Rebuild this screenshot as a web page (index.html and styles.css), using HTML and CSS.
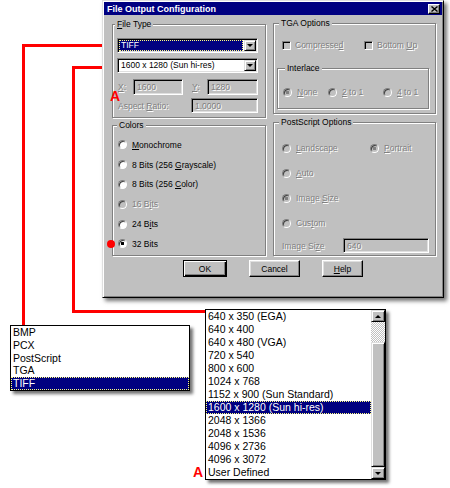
FILE: index.html
```html
<!DOCTYPE html>
<html lang="en">

<head>
    <meta charset="UTF-8">
    <meta name="viewport" content="width=device-width, initial-scale=1.0">
    <title>File Output Configuration</title>
    <link rel="stylesheet" href="styles.css">
</head>

<body>
<div class="canvas">
    <!-- red callout lines from the combos down to their open lists -->
    <svg class="callouts" width="450" height="488">
        <polyline points="23.5,326 23.5,45.5 106,45.5" />
        <polyline points="106,67.5 73.5,67.5 73.5,311.5 206,311.5" />
    </svg>

    <div class="dialog">
        <div class="titlebar">
            <span class="title">File Output Configuration</span>
            <span class="close-btn">
                <svg width="7" height="6" viewBox="0 0 7 6"><path d="M0.5 0.5 L6.5 5.5 M6.5 0.5 L0.5 5.5" stroke="#000" stroke-width="1.4" fill="none" /></svg>
            </span>
        </div>

        <div class="dialog-body">
            <div class="column col-left">
                <div class="group group-filetype">
                    <span class="legend"><u>F</u>ile Type</span>
                    <div class="combo combo-first is-focused">
                        <span class="combo-value">TIFF</span>
                        <span class="drop-btn"></span>
                    </div>
                    <div class="combo combo-second">
                        <span class="combo-value">1600 x 1280 (Sun hi-res)</span>
                        <span class="drop-btn"></span>
                    </div>
                    <div class="field-row row-xy">
                        <span class="label lbl-x disabled"><u>X</u>:</span>
                        <span class="edit edit-x disabled">1600</span>
                        <span class="label lbl-y disabled"><u>Y</u>:</span>
                        <span class="edit edit-y disabled">1280</span>
                    </div>
                    <div class="field-row row-aspect">
                        <span class="label lbl-aspect disabled">Aspect <u>R</u>atio:</span>
                        <span class="edit edit-aspect disabled">1.0000</span>
                    </div>
                </div>

                <div class="group group-colors">
                    <span class="legend">Colors</span>
                    <div class="color-list">
                        <div class="option"><span class="radio"></span><span><u>M</u>onochrome</span></div>
                        <div class="option"><span class="radio"></span><span>8 Bits (256 <u>G</u>rayscale)</span></div>
                        <div class="option"><span class="radio"></span><span>8 Bits (256 <u>C</u>olor)</span></div>
                        <div class="option"><span class="radio is-disabled"></span><span class="disabled">16 B<u>i</u>ts</span></div>
                        <div class="option"><span class="radio"></span><span>24 B<u>i</u>ts</span></div>
                        <div class="option"><span class="radio is-checked"></span><span>32 Bits</span></div>
                    </div>
                </div>
            </div>

            <div class="column col-right">
                <div class="group group-tga">
                    <span class="legend">TGA Options</span>
                    <div class="check-row">
                        <div class="check-item item-compressed"><span class="checkbox"></span><span class="disabled">Compresse<u>d</u></span></div>
                        <div class="check-item"><span class="checkbox"></span><span class="disabled">Bottom <u>U</u>p</span></div>
                    </div>
                    <div class="group subgroup">
                        <span class="legend">Interlace</span>
                        <div class="option-row interlace-row">
                            <div class="option item-none"><span class="radio is-disabled is-checked"></span><span class="disabled"><u>N</u>one</span></div>
                            <div class="option item-half"><span class="radio is-disabled"></span><span class="disabled"><u>2</u> to 1</span></div>
                            <div class="option"><span class="radio is-disabled"></span><span class="disabled"><u>4</u> to 1</span></div>
                        </div>
                    </div>
                </div>

                <div class="group group-ps">
                    <span class="legend">PostScript Options</span>
                    <div class="option-row ps-row ps-first">
                        <div class="option item-landscape"><span class="radio is-disabled"></span><span class="disabled"><u>L</u>andscape</span></div>
                        <div class="option"><span class="radio is-disabled is-checked"></span><span class="disabled"><u>P</u>ortrait</span></div>
                    </div>
                    <div class="option-row ps-row">
                        <div class="option"><span class="radio is-disabled"></span><span class="disabled"><u>A</u>uto</span></div>
                    </div>
                    <div class="option-row ps-row">
                        <div class="option"><span class="radio is-disabled is-checked"></span><span class="disabled">Image <u>S</u>ize</span></div>
                    </div>
                    <div class="option-row ps-row">
                        <div class="option"><span class="radio is-disabled"></span><span class="disabled">Cus<u>t</u>om</span></div>
                    </div>
                    <div class="field-row row-size">
                        <span class="label lbl-size disabled">Image Si<u>z</u>e</span>
                        <span class="edit edit-size disabled">640</span>
                    </div>
                </div>
            </div>
        </div>

        <div class="buttons">
            <span class="btn btn-default btn-ok">OK</span>
            <span class="btn btn-cancel">Cancel</span>
            <span class="btn btn-help"><u>H</u>elp</span>
        </div>
    </div>

    <div class="list list-types">
        <div class="list-item">BMP</div>
        <div class="list-item">PCX</div>
        <div class="list-item">PostScript</div>
        <div class="list-item">TGA</div>
        <div class="list-item selected">TIFF</div>
    </div>

    <div class="list list-sizes">
        <div class="list-items">
            <div class="list-item">640 x 350 (EGA)</div>
            <div class="list-item">640 x 400</div>
            <div class="list-item">640 x 480 (VGA)</div>
            <div class="list-item">720 x 540</div>
            <div class="list-item">800 x 600</div>
            <div class="list-item">1024 x 768</div>
            <div class="list-item">1152 x 900 (Sun Standard)</div>
            <div class="list-item selected">1600 x 1280 (Sun hi-res)</div>
            <div class="list-item">2048 x 1366</div>
            <div class="list-item">2048 x 1536</div>
            <div class="list-item">4096 x 2736</div>
            <div class="list-item">4096 x 3072</div>
            <div class="list-item">User Defined</div>
        </div>
        <div class="scrollbar">
            <span class="scroll-btn arrow-up"></span>
            <span class="scroll-track"></span>
            <span class="scroll-thumb"></span>
            <span class="scroll-btn arrow-down"></span>
        </div>
    </div>

    <span class="mark mark-a1">A</span>
    <span class="mark mark-a2">A</span>
    <span class="mark-dot"></span>
</div>
</body>
</html>
```

FILE: styles.css
```css
body {
    margin: 0;
    background-color: #fff;
    font-family: "Liberation Sans", Arial, sans-serif;
}

.canvas {
    position: relative;
    width: 450px;
    height: 488px;
    overflow: hidden;
}

.callouts {
    position: absolute;
    left: 0;
    top: 0;
}

.callouts polyline {
    fill: none;
    stroke: #f00;
    stroke-width: 3;
}

/* dialog window */
.dialog {
    position: absolute;
    left: 102px;
    top: 0;
    width: 342px;
    height: 298px;
    box-sizing: border-box;
    padding: 1px;
    background-color: #c0c0c0;
    border: 1px solid;
    border-color: #dfdfdf #000 #000 #dfdfdf;
    box-shadow: inset 1px 1px 0 #fff, inset -1px -1px 0 #808080, 3px 3px 4px rgba(0, 0, 0, 0.55);
    font-size: 8.5px;
    color: #000;
}

.titlebar {
    height: 13px;
    display: flex;
    align-items: center;
    justify-content: space-between;
    padding: 0 2px 0 3px;
    background-color: #000080;
    color: #fff;
    font-weight: bold;
    font-size: 9px;
}

.close-btn {
    width: 12px;
    height: 10px;
    box-sizing: border-box;
    display: flex;
    align-items: center;
    justify-content: center;
    background-color: #c0c0c0;
    border: 1px solid;
    border-color: #fff #000 #000 #fff;
    box-shadow: inset -1px -1px 0 #808080;
}

.dialog-body {
    display: flex;
    gap: 7px;
    padding: 0 6px 0 8px;
}

.column {
    display: flex;
    flex-direction: column;
}

.col-left {
    width: 154px;
    padding-top: 9px;
    gap: 7px;
}

.col-right {
    width: 163px;
    padding-top: 8px;
    gap: 8px;
}

/* etched group box */
.group {
    box-sizing: border-box;
    border: 1px solid #808080;
    box-shadow: 1px 1px 0 #fff, inset 1px 1px 0 #fff;
}

.legend {
    display: block;
    width: fit-content;
    height: 11px;
    line-height: 11px;
    margin: -6px 0 0 0;
    padding: 0 2px;
    background-color: #c0c0c0;
}

.group-filetype {
    height: 94px;
    padding: 0 7px 0 4px;
}

.group-filetype .legend {
    margin-left: -2px;
}

.group-colors {
    height: 131px;
    padding-left: 5px;
}

.group-colors .legend {
    margin-left: -1px;
}

.group-tga {
    height: 91px;
    padding: 0 6px 0 3px;
}

.group-tga .legend {
    margin-left: 2px;
}

.group-ps {
    height: 134px;
    padding: 0 6px 0 8px;
}

.group-ps .legend {
    margin-left: -3px;
}

.subgroup {
    height: 41px;
    margin-top: 17px;
    padding-left: 5px;
}

/* combo boxes and edits */
.combo,
.edit {
    box-sizing: border-box;
    border: 1px solid;
    border-color: #808080 #fff #fff #808080;
    box-shadow: inset 1px 1px 0 #000, inset -1px -1px 0 #dfdfdf;
}

.combo {
    display: flex;
    height: 15px;
    padding: 1px;
    background-color: #fff;
}

.combo-first {
    margin-top: 8px;
}

.combo-second {
    margin-top: 5px;
}

.combo-value {
    flex: 1;
    line-height: 11px;
    padding-left: 2px;
    margin-right: 1px;
    white-space: nowrap;
}

.is-focused .combo-value {
    background-color: #000080;
    color: #fff;
    outline: 1px dotted #ffff80;
    outline-offset: -1px;
}

.drop-btn {
    width: 12px;
    box-sizing: border-box;
    display: flex;
    align-items: center;
    justify-content: center;
    background-color: #c0c0c0;
    border: 1px solid;
    border-color: #dfdfdf #000 #000 #dfdfdf;
    box-shadow: inset 1px 1px 0 #fff, inset -1px -1px 0 #808080;
}

.drop-btn::before {
    content: "";
    border-left: 3px solid transparent;
    border-right: 3px solid transparent;
    border-top: 3px solid #000;
}

.edit {
    display: flex;
    align-items: center;
    padding-left: 3px;
    background-color: #c0c0c0;
}

.field-row {
    display: flex;
    align-items: center;
}

.row-xy {
    height: 16px;
    margin-top: 6px;
}

.row-xy .edit {
    height: 16px;
}

.row-aspect {
    height: 15px;
    margin-top: 3px;
}

.row-aspect .edit,
.row-size .edit {
    height: 15px;
}

.label {
    padding-left: 1px;
    box-sizing: border-box;
}

.lbl-x {
    width: 16px;
}

.edit-x {
    width: 50px;
}

.lbl-y {
    width: 16px;
    margin-left: 8px;
}

.edit-y,
.edit-aspect,
.edit-size {
    flex: 1;
}

.lbl-aspect {
    width: 74px;
}

.disabled {
    color: #808080;
    text-shadow: 1px 1px 0 #fff;
}

/* radios and checkboxes */
.option,
.check-item {
    display: flex;
    align-items: center;
    gap: 5px;
    white-space: nowrap;
}

.check-item {
    gap: 4px;
}

.radio {
    width: 9px;
    height: 9px;
    box-sizing: border-box;
    border-radius: 50%;
    border: 1px solid;
    border-color: #808080 #fff #fff #808080;
    box-shadow: inset 1px 1px 0 #404040;
    background-color: #fff;
    flex: none;
}

.radio.is-checked {
    background: radial-gradient(circle, #000 0 1.4px, #fff 1.9px);
}

.radio.is-disabled {
    background-color: #c0c0c0;
}

.radio.is-disabled.is-checked {
    background: radial-gradient(circle, #808080 0 1.4px, #c0c0c0 1.9px);
}

.checkbox {
    width: 9px;
    height: 9px;
    box-sizing: border-box;
    border: 1px solid;
    border-color: #808080 #fff #fff #808080;
    box-shadow: inset 1px 1px 0 #000;
    background-color: #c0c0c0;
    flex: none;
}

.color-list {
    margin-top: 4px;
}

.color-list .option {
    height: 19.8px;
}

.check-row {
    display: flex;
    height: 12px;
    margin-top: 10px;
    padding-left: 5px;
}

.item-compressed {
    width: 82px;
}

.option-row {
    display: flex;
    height: 12px;
}

.interlace-row {
    margin-top: 12px;
}

.item-none {
    width: 45px;
}

.item-half {
    width: 55px;
}

.ps-row {
    margin-top: 13px;
}

.ps-first {
    margin-top: 14px;
}

.item-landscape {
    width: 88px;
}

.row-size {
    height: 15px;
    margin-top: 9px;
}

.lbl-size {
    width: 61px;
    padding-left: 0;
}

/* push buttons */
.buttons {
    display: flex;
    justify-content: center;
    gap: 22px;
    margin-top: 4px;
}

.btn {
    height: 17px;
    box-sizing: border-box;
    display: flex;
    align-items: center;
    justify-content: center;
    background-color: #c0c0c0;
    border: 1px solid;
    border-color: #fff #000 #000 #fff;
    box-shadow: inset -1px -1px 0 #808080, inset 1px 1px 0 #dfdfdf;
}

.btn-default {
    border-color: #000;
    box-shadow: inset 1px 1px 0 #fff, inset -1px -1px 0 #000, inset -2px -2px 0 #808080;
}

.btn-ok {
    width: 44px;
}

.btn-cancel {
    width: 51px;
}

.btn-help {
    width: 41px;
}

/* dropped-down lists */
.list {
    position: absolute;
    box-sizing: border-box;
    background-color: #fff;
    border: 1px solid #000;
    box-shadow: 3px 3px 3px rgba(0, 0, 0, 0.55);
    font-size: 10.5px;
    color: #000;
}

.list-types {
    left: 10px;
    top: 325px;
    width: 180px;
}

.list-types .list-item {
    height: 12.8px;
    line-height: 12.8px;
}

.list-sizes {
    left: 205px;
    top: 309px;
    width: 181px;
    display: flex;
}

.list-items {
    flex: 1;
}

.list-item {
    height: 13px;
    line-height: 13px;
    padding-left: 2px;
    white-space: nowrap;
}

.list-item.selected {
    background-color: #000080;
    color: #fff;
    outline: 1px dotted #ffff80;
    outline-offset: -1px;
}

.scrollbar {
    width: 14px;
    display: flex;
    flex-direction: column;
}

.scroll-btn,
.scroll-thumb {
    box-sizing: border-box;
    background-color: #c0c0c0;
    border: 1px solid;
    border-color: #dfdfdf #000 #000 #dfdfdf;
    box-shadow: inset 1px 1px 0 #fff, inset -1px -1px 0 #808080;
}

.scroll-btn {
    height: 12px;
    display: flex;
    align-items: center;
    justify-content: center;
}

.arrow-up::before {
    content: "";
    border-left: 3px solid transparent;
    border-right: 3px solid transparent;
    border-bottom: 3px solid #000;
}

.arrow-down::before {
    content: "";
    border-left: 3px solid transparent;
    border-right: 3px solid transparent;
    border-top: 3px solid #000;
}

.scroll-track {
    height: 20px;
    background: repeating-conic-gradient(#fff 0 25%, #c0c0c0 0 50%) 0 0 / 2px 2px;
}

.scroll-thumb {
    flex: 1;
}

/* red annotations */
.mark {
    position: absolute;
    color: #f00;
    font-weight: bold;
    font-size: 14px;
    line-height: 14px;
}

.mark-a1 {
    left: 110px;
    top: 89px;
}

.mark-a2 {
    left: 193px;
    top: 465px;
}

.mark-dot {
    position: absolute;
    left: 107px;
    top: 240px;
    width: 8px;
    height: 8px;
    border-radius: 50%;
    background-color: #f00;
}
```
